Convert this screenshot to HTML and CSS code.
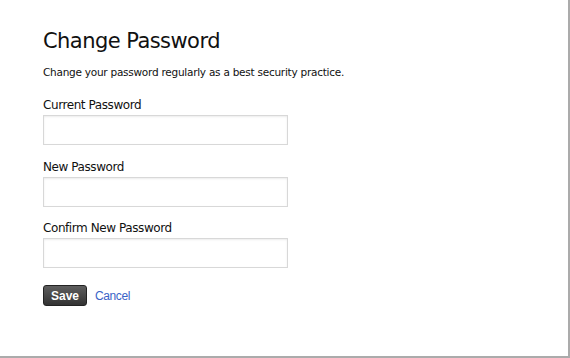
FILE: index.html
```html
<!DOCTYPE html>
<html>
<head>
<meta charset="utf-8">
<link rel="stylesheet" href="styles.css">
</head>
<body>
<div class="frame">
  <div class="content">
    <h1 class="title">Change Password</h1>
    <p class="intro">Change your password regularly as a best security practice.</p>
    <form class="form">
      <div class="field">
        <label class="label">Current Password</label>
        <input class="input" type="password">
      </div>
      <div class="field">
        <label class="label">New Password</label>
        <input class="input" type="password">
      </div>
      <div class="field">
        <label class="label">Confirm New Password</label>
        <input class="input" type="password">
      </div>
      <div class="actions">
        <button type="button" class="btn-save">Save</button>
        <a class="cancel" href="#">Cancel</a>
      </div>
    </form>
  </div>
</div>
</body>
</html>
```
FILE: styles.css
```css
html, body {
  margin: 0;
  padding: 0;
  background: #fff;
}
.frame {
  width: 570px;
  height: 358px;
  box-sizing: border-box;
  border-right: 2px solid #ababab;
  border-bottom: 2px solid #ababab;
  background: #fff;
}
.content {
  padding: 26px 0 0 43px;
  font-family: "DejaVu Sans", Verdana, sans-serif;
  color: #111;
}
.title {
  margin: 0;
  font-size: 21px;
  font-weight: normal;
  line-height: 30px;
  letter-spacing: -0.55px;
}
.intro {
  margin: 9px 0 0;
  font-size: 10.5px;
  line-height: 14px;
  letter-spacing: -0.25px;
}
.form {
  margin-top: 18px;
  display: flex;
  flex-direction: column;
  gap: 13.5px;
}
.field {
  display: flex;
  flex-direction: column;
}
.label {
  font-size: 12px;
  line-height: 16px;
  letter-spacing: -0.42px;
  margin-bottom: 2px;
}
.input {
  width: 245px;
  height: 30px;
  box-sizing: border-box;
  border: 1px solid #d8d8d8;
  box-shadow: inset 0 1px 2px rgba(0,0,0,0.08);
  margin: 0;
  padding: 0 4px;
}
.actions {
  display: flex;
  align-items: center;
  gap: 8px;
  margin-top: 3.5px;
}
.btn-save {
  width: 44px;
  height: 21px;
  border: 1px solid #222;
  border-radius: 3px;
  background: linear-gradient(#5e5e5e, #333);
  color: #fff;
  font-family: "Liberation Sans", Arial, sans-serif;
  font-weight: bold;
  font-size: 12px;
  padding: 0;
}
.cancel {
  font-family: "Liberation Sans", Arial, sans-serif;
  font-size: 12px;
  letter-spacing: -0.4px;
  color: #3a63c7;
  text-decoration: none;
}
```
